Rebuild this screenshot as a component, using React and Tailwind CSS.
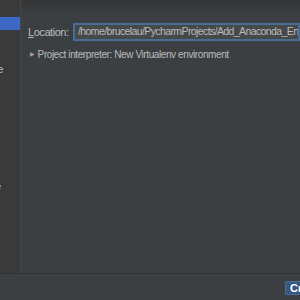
export default function App() {
  return (
    <div className="w-[300px] h-[300px] overflow-hidden bg-[#3c3f41] flex flex-col font-['Liberation_Sans',sans-serif] text-[#bbbbbb]">
      <div className="flex flex-1 min-h-0">
        {/* sidebar */}
        <div className="w-[21px] shrink-0 bg-[#3a3a3a] border-r border-[#444748] flex flex-col overflow-hidden">
          <div className="h-[17px] shrink-0" />
          <div className="h-[13px] bg-[#3d68c6] shrink-0" />
          <div className="h-[33px] shrink-0" />
          <div className="text-[11px] leading-[13px] whitespace-nowrap -ml-[12px]">me</div>
          <div className="h-[104px] shrink-0" />
          <div className="text-[11px] leading-[13px] whitespace-nowrap -ml-[8px]">te</div>
        </div>
        {/* main */}
        <div className="flex-1 min-w-0 relative bg-gradient-to-b from-[#333537] to-[#3c3f41] to-[14px]">
          <div className="flex items-center pt-[23px] pl-[7px] whitespace-nowrap">
            <span className="text-[11px] tracking-[-0.45px] w-[45px] shrink-0">
              <span className="underline">L</span>ocation:
            </span>
            <div className="h-[18px] flex-1 min-w-0 bg-[#45494a] border-2 border-[#4a6d97] flex items-center pl-[3px] overflow-hidden">
              <span className="text-[10.5px] tracking-[-0.6px] text-[#bbbbbb]">/home/brucelau/PycharmProjects/Add_Anaconda_Env</span>
            </div>
          </div>
          <div className="flex items-center pl-[9px] mt-[6px] whitespace-nowrap text-[10px] tracking-[-0.4px]">
            <span className="text-[6px] mr-[3px] text-[#a0a0a0]">▶</span>
            <span>Project interpreter: New Virtualenv environment</span>
          </div>
        </div>
      </div>
      {/* bottom bar */}
      <div className="h-[27px] shrink-0 border-t border-[#323232] bg-[#3c3f41] flex items-start justify-end pt-[7px] overflow-hidden">
        <div className="h-[14px] w-[30px] shrink-0 -mr-[15px] bg-[#365880] border border-[#4b6c9a] rounded-[2px] text-white font-bold text-[11px] leading-[12px] pl-[4px]">
          Create
        </div>
      </div>
    </div>
  );
}
